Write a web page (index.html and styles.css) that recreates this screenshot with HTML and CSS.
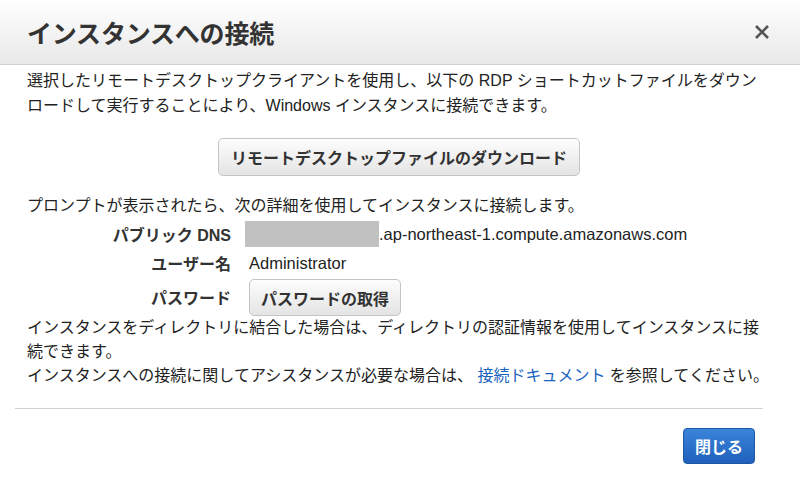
FILE: index.html
```html
<!DOCTYPE html>
<html lang="ja">
<head>
<meta charset="utf-8">
<link rel="stylesheet" href="styles.css">
</head>
<body>
<div class="modal">
  <header class="modal-header">
    <h1 class="title">インスタンスへの接続</h1>
    <span class="close" aria-label="close">
      <svg width="16" height="16" viewBox="0 0 16 16"><path d="M2 2 L14 14 M14 2 L2 14" stroke="#555" stroke-width="2.6" fill="none"/></svg>
    </span>
  </header>
  <div class="modal-body">
    <p class="intro">選択したリモートデスクトップクライアントを使用し、以下の RDP ショートカットファイルをダウンロードして実行することにより、Windows インスタンスに接続できます。</p>
    <div class="center"><button class="btn">リモートデスクトップファイルのダウンロード</button></div>
    <p class="prompt">プロンプトが表示されたら、次の詳細を使用してインスタンスに接続します。</p>
    <div class="details">
      <div class="label">パブリック DNS</div>
      <div class="value latin"><span class="redact"></span>.ap-northeast-1.compute.amazonaws.com</div>
      <div class="label">ユーザー名</div>
      <div class="value latin">Administrator</div>
      <div class="label">パスワード</div>
      <div class="value"><button class="btn small">パスワードの取得</button></div>
    </div>
    <p class="note">インスタンスをディレクトリに結合した場合は、ディレクトリの認証情報を使用してインスタンスに接続できます。<br>インスタンスへの接続に関してアシスタンスが必要な場合は、 <a class="link" href="#">接続ドキュメント</a> を参照してください。</p>
  </div>
  <hr class="divider">
  <footer class="modal-footer">
    <button class="btn primary">閉じる</button>
  </footer>
</div>
</body>
</html>
```

FILE: styles.css
```css
html, body {
  margin: 0;
  padding: 0;
  background: #fff;
}
body {
  font-family: "Liberation Sans", "Noto Sans CJK JP", sans-serif;
  font-size: 16px;
  color: #222;
  width: 800px;
  height: 487px;
  overflow: hidden;
}
.modal-header {
  height: 64px;
  border-bottom: 1px solid #cfcfcf;
  background: linear-gradient(#ffffff, #e8e8e8);
  display: flex;
  align-items: center;
  justify-content: space-between;
  padding: 0 30px 0 27px;
}
.title {
  margin: 0;
  font-size: 25px;
  font-weight: 700;
  color: #333;
  letter-spacing: -0.2px;
}
.close {
  display: flex;
  width: 16px;
  height: 16px;
}
.modal-body {
  padding: 3px 29px 0 27px;
}
p {
  margin: 0;
}
.intro {
  line-height: 25px;
}
.center {
  display: flex;
  justify-content: center;
  margin-top: 20px;
}
.btn {
  font-family: inherit;
  font-size: 16px;
  font-weight: 700;
  color: #333;
  background: linear-gradient(#fdfdfd, #e4e4e4);
  border: 1px solid #c4c4c4;
  border-radius: 5px;
  padding: 0 12px;
  height: 38px;
  cursor: pointer;
}
.btn.small {
  height: 37px;
  padding: 0 11px;
}
.prompt {
  margin-top: 17px;
  line-height: 25px;
}
.details {
  display: grid;
  grid-template-columns: 204px auto;
  grid-template-rows: 26px 26px 37px;
  column-gap: 18px;
  row-gap: 3px;
  margin-top: 3px;
  align-items: center;
}
.label {
  font-weight: 700;
  text-align: right;
  color: #333;
}
.details .label:nth-of-type(5) {
  align-self: start;
  padding-top: 6px;
}
.value {
  display: flex;
  align-items: center;
}
.latin {
  font-size: 16.5px;
}
.redact {
  display: inline-block;
  width: 134px;
  height: 26px;
  background: #c1c1c1;
  margin-left: -4px;
}
.note {
  line-height: 24px;
  margin-top: 0;
}
.link {
  color: #1a64bf;
  text-decoration: none;
}
.divider {
  border: 0;
  border-top: 1px solid #d2d2d2;
  margin: 20px 37px 0 15px;
}
.modal-footer {
  display: flex;
  justify-content: flex-end;
  padding: 19px 45px 0 0;
}
.btn.primary {
  width: 72px;
  height: 36px;
  padding: 0;
  color: #fff;
  background: linear-gradient(#3a85da, #1f60bb);
  border: 1px solid #1c57a6;
  border-radius: 4px;
}
```
